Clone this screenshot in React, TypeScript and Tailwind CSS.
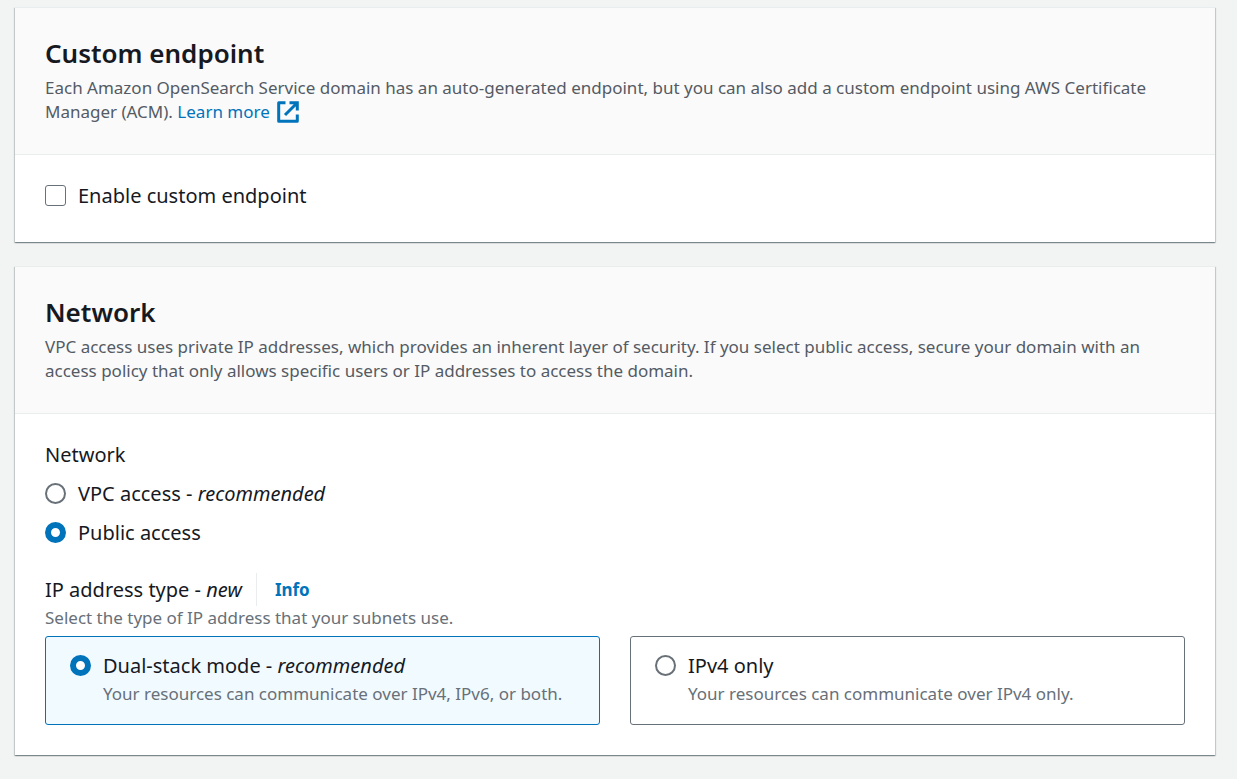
import { useState } from "react";
import type { ReactNode } from "react";

function Panel({ title, description, children }: { title: string; description: ReactNode; children: ReactNode }) {
  return (
    <section className="border-t border-[#eaeded] bg-white shadow-[0_1px_1px_0_rgba(0,28,36,0.3),1px_1px_1px_0_rgba(0,28,36,0.15),-1px_1px_1px_0_rgba(0,28,36,0.15)]">
      <header className="border-b border-[#eaeded] bg-[#fafafa] px-[30px] pt-7 pb-[30px]">
        <h2 className="mb-1.5 text-[26px] leading-[34px] font-semibold text-[#16191f]">{title}</h2>
        <p className="text-[17px] leading-6 text-[#545b64]">{description}</p>
      </header>
      <div className="px-[30px] pt-6 pb-[30px]">{children}</div>
    </section>
  );
}

function ExternalIcon() {
  return (
    <svg viewBox="0 0 24 24" className="ml-1.5 inline-block size-6 align-[-6px]" fill="none" stroke="currentColor" strokeWidth="3" aria-hidden="true">
      <path d="M9.5 2.7H2.7v18.6h18.6V14.5" strokeLinejoin="round" />
      <path d="M13.5 2.7h7.8v7.8M20.8 3.2L9 15" />
    </svg>
  );
}

const radioClass =
  "size-[21px] shrink-0 appearance-none rounded-full border-2 border-[#687078] bg-white checked:border-[6px] checked:border-[#0073bb]";

type RadioProps = { name: string; checked: boolean; onChange: () => void; children: ReactNode };

function RadioRow({ name, checked, onChange, children }: RadioProps) {
  return (
    <label className="flex items-center gap-3">
      <input type="radio" name={name} checked={checked} onChange={onChange} className={radioClass} />
      <span>{children}</span>
    </label>
  );
}

function Tile({ name, checked, onChange, children, hint }: RadioProps & { hint: string }) {
  return (
    <label className="grid grid-cols-[21px_1fr] items-center gap-x-3 rounded-[3px] border border-[#687078] px-6 pt-3 pb-[18px] has-checked:border-[#0073bb] has-checked:bg-[#f1faff]">
      <input type="radio" name={name} checked={checked} onChange={onChange} className={radioClass} />
      <span>{children}</span>
      <span className="col-start-2 text-[17px] leading-6 text-[#687078]">{hint}</span>
    </label>
  );
}

export default function App() {
  const [custom, setCustom] = useState(false);
  const [access, setAccess] = useState("public");
  const [ipType, setIpType] = useState("dual");

  return (
    <main className="flex min-h-screen flex-col gap-6 bg-[#f2f3f3] pt-[7px] pr-[22px] pb-[23px] pl-[15px] font-['Noto_Sans',sans-serif] text-[20px] leading-[33px] text-[#16191f]">
      <Panel
        title="Custom endpoint"
        description={
          <>
            Each Amazon OpenSearch Service domain has an auto-generated endpoint, but you can also add a custom endpoint
            using AWS Certificate Manager (ACM).{" "}
            <a href="#learn-more" className="whitespace-nowrap text-[#0073bb]">
              Learn more
              <ExternalIcon />
            </a>
          </>
        }
      >
        <label className="flex items-center gap-3">
          <input
            type="checkbox"
            checked={custom}
            onChange={(e) => setCustom(e.target.checked)}
            className="size-[21px] shrink-0 appearance-none rounded-[3px] border border-[#687078] bg-white checked:border-[#0073bb] checked:bg-[#0073bb]"
          />
          <span>Enable custom endpoint</span>
        </label>
      </Panel>

      <Panel
        title="Network"
        description="VPC access uses private IP addresses, which provides an inherent layer of security. If you select public access, secure your domain with an access policy that only allows specific users or IP addresses to access the domain."
      >
        <fieldset className="flex flex-col gap-1.5">
          <legend className="mb-1.5">Network</legend>
          <RadioRow name="access" checked={access === "vpc"} onChange={() => setAccess("vpc")}>
            VPC access - <em>recommended</em>
          </RadioRow>
          <RadioRow name="access" checked={access === "public"} onChange={() => setAccess("public")}>
            Public access
          </RadioRow>
        </fieldset>

        <div role="radiogroup" aria-labelledby="ip-label" className="mt-6">
          <div className="flex">
            <span id="ip-label" className="pr-3.5">
              IP address type - <em>new</em>
            </span>
            <a href="#info" className="border-l border-[#eaeded] pl-[18px] text-[17px] font-bold text-[#0073bb]">
              Info
            </a>
          </div>
          <p className="text-[17px] leading-6 text-[#687078]">Select the type of IP address that your subnets use.</p>
          <div className="mt-1.5 grid grid-cols-2 gap-[30px]">
            <Tile
              name="ip"
              checked={ipType === "dual"}
              onChange={() => setIpType("dual")}
              hint="Your resources can communicate over IPv4, IPv6, or both."
            >
              Dual-stack mode - <em>recommended</em>
            </Tile>
            <Tile
              name="ip"
              checked={ipType === "ipv4"}
              onChange={() => setIpType("ipv4")}
              hint="Your resources can communicate over IPv4 only."
            >
              IPv4 only
            </Tile>
          </div>
        </div>
      </Panel>
    </main>
  );
}
